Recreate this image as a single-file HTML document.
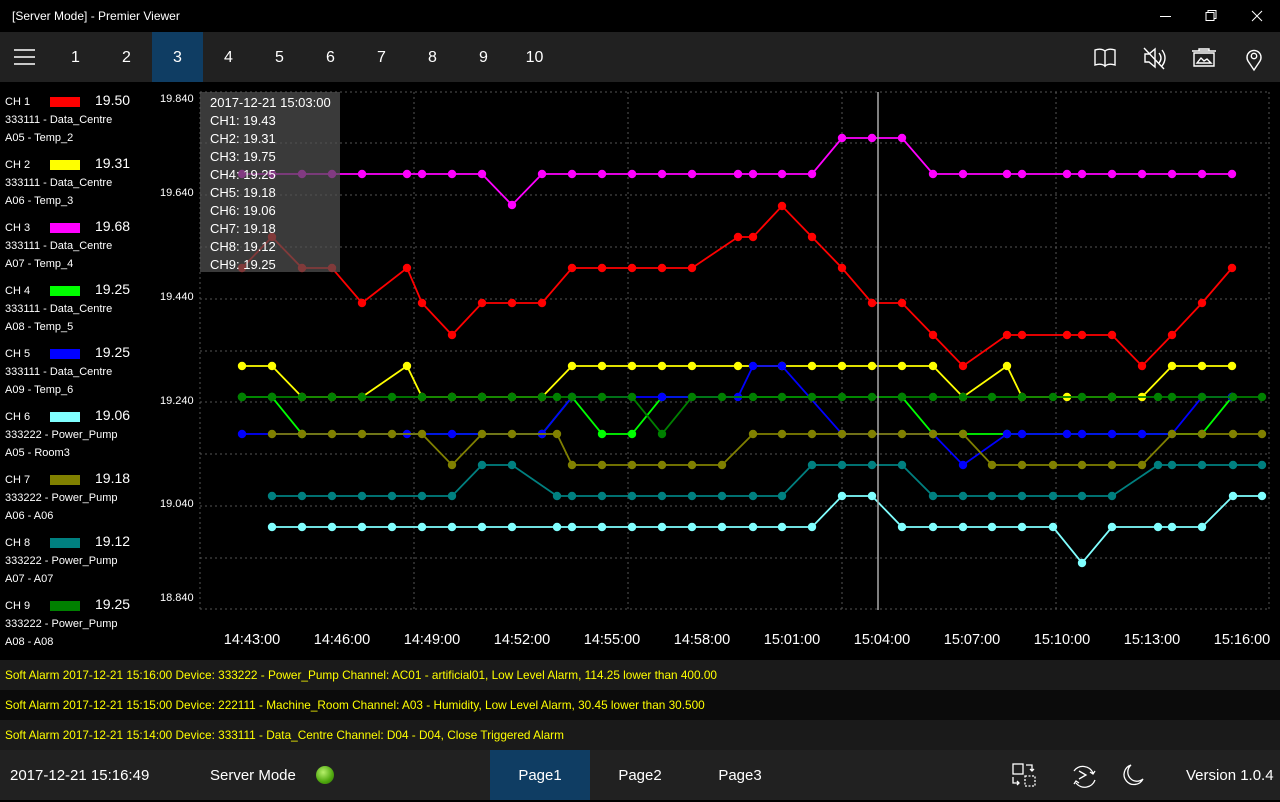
<!DOCTYPE html>
<html><head><meta charset="utf-8">
<style>
*{margin:0;padding:0;box-sizing:border-box}
body{width:1280px;height:800px;background:#000;color:#fff;font-family:"Liberation Sans",sans-serif;position:relative;overflow:hidden}
.abs{position:absolute}
#title{left:0;top:0;width:1280px;height:32px;background:#000;font-size:12px}
#nav{left:0;top:32px;width:1280px;height:50px;background:#212121}
.num{position:absolute;top:1px;width:51px;height:50px;line-height:50px;text-align:center;font-size:16px}
.leg{position:absolute;left:5px;font-size:11px;line-height:18px}
.sw{position:absolute;left:45px;top:4px;width:30px;height:10px}
.val{position:absolute;left:90px;top:-2px;font-size:14px}
.yl{position:absolute;left:160px;font-size:11px}
.xl{position:absolute;top:632px;font-size:14.5px;width:80px;text-align:center}
.al{position:absolute;left:0;width:1280px;height:30px;line-height:31px;padding-left:5px;font-size:11.8px;color:#ffff00}
#bot{left:0;top:750px;width:1280px;height:50px;background:#212121;font-size:15px}
.pg{position:absolute;top:0;width:100px;height:50px;line-height:52px;text-align:center}
</style></head><body>
<div id="title" class="abs"><span class="abs" style="left:12px;top:9px">[Server Mode] - Premier Viewer</span>
<svg class="abs" style="left:1150px;top:0" width="130" height="32" fill="none" stroke="#fff" stroke-width="1"><path d="M10 16.5h11"/><path d="M56 12.5h8v8h-8z M58 12.5v-2h8v8h-2"/><path d="M102 11l10 10M112 11l-10 10"/></svg>
</div>
<div id="nav" class="abs">
<svg class="abs" style="left:13px;top:16px" width="24" height="18" stroke="#fff" stroke-width="1.6"><path d="M1 2h21M1 9h21M1 16h21"/></svg>
<div class="num" style="left:50px">1</div><div class="num" style="left:101px">2</div><div class="num" style="left:152px;top:0;background:#0f3d63;padding-top:1px">3</div><div class="num" style="left:203px">4</div><div class="num" style="left:254px">5</div><div class="num" style="left:305px">6</div><div class="num" style="left:356px">7</div><div class="num" style="left:407px">8</div><div class="num" style="left:458px">9</div><div class="num" style="left:509px">10</div>
<svg class="abs" style="left:1090px;top:12px" width="180" height="28" fill="none" stroke="#fff" stroke-width="1.4">
<path d="M5 6q6-2 10 1v15q-4-3-10-1z M15 7q4-3 10-1v15q-6-2-10 1z"/>
<path d="M55 10h4l6-5v18l-6-5h-4z M69 9q4 5 0 10 M72 6q6 8 0 16 M54 4l20 21"/>
<path d="M102 7h24 M109 7v-2h10v2 M104 9h20v13h-20z M107 19l4-5 3 3 3-2 4 4z"/>
<path d="M164 26l-6-9a7 7 0 1 1 12 0z"/><circle cx="164" cy="12" r="2.7"/>
</svg>
</div>

<div class="leg" style="top:93px">CH 1<div class="sw" style="background:#ff0000"></div><div class="val">19.50</div><br>333111 - Data_Centre<br>A05 - Temp_2</div>
<div class="leg" style="top:156px">CH 2<div class="sw" style="background:#ffff00"></div><div class="val">19.31</div><br>333111 - Data_Centre<br>A06 - Temp_3</div>
<div class="leg" style="top:219px">CH 3<div class="sw" style="background:#ff00ff"></div><div class="val">19.68</div><br>333111 - Data_Centre<br>A07 - Temp_4</div>
<div class="leg" style="top:282px">CH 4<div class="sw" style="background:#00ff00"></div><div class="val">19.25</div><br>333111 - Data_Centre<br>A08 - Temp_5</div>
<div class="leg" style="top:345px">CH 5<div class="sw" style="background:#0000ff"></div><div class="val">19.25</div><br>333111 - Data_Centre<br>A09 - Temp_6</div>
<div class="leg" style="top:408px">CH 6<div class="sw" style="background:#80ffff"></div><div class="val">19.06</div><br>333222 - Power_Pump<br>A05 - Room3</div>
<div class="leg" style="top:471px">CH 7<div class="sw" style="background:#808000"></div><div class="val">19.18</div><br>333222 - Power_Pump<br>A06 - A06</div>
<div class="leg" style="top:534px">CH 8<div class="sw" style="background:#008080"></div><div class="val">19.12</div><br>333222 - Power_Pump<br>A07 - A07</div>
<div class="leg" style="top:597px">CH 9<div class="sw" style="background:#008000"></div><div class="val">19.25</div><br>333222 - Power_Pump<br>A08 - A08</div>

<div class="yl" style="top:93px">19.840</div><div class="yl" style="top:187px">19.640</div><div class="yl" style="top:291px">19.440</div><div class="yl" style="top:395px">19.240</div><div class="yl" style="top:498px">19.040</div><div class="yl" style="top:592px">18.840</div>

<svg class="abs" style="left:0;top:0" width="1280" height="660">
<defs>
<marker id="m1" markerUnits="userSpaceOnUse" markerWidth="10" markerHeight="10" refX="5" refY="5"><circle cx="5" cy="5" r="4.2" fill="#ff0000"/></marker>
<marker id="m2" markerUnits="userSpaceOnUse" markerWidth="10" markerHeight="10" refX="5" refY="5"><circle cx="5" cy="5" r="4.2" fill="#ffff00"/></marker>
<marker id="m3" markerUnits="userSpaceOnUse" markerWidth="10" markerHeight="10" refX="5" refY="5"><circle cx="5" cy="5" r="4.2" fill="#ff00ff"/></marker>
<marker id="m4" markerUnits="userSpaceOnUse" markerWidth="10" markerHeight="10" refX="5" refY="5"><circle cx="5" cy="5" r="4.2" fill="#00ff00"/></marker>
<marker id="m5" markerUnits="userSpaceOnUse" markerWidth="10" markerHeight="10" refX="5" refY="5"><circle cx="5" cy="5" r="4.2" fill="#0000ff"/></marker>
<marker id="m6" markerUnits="userSpaceOnUse" markerWidth="10" markerHeight="10" refX="5" refY="5"><circle cx="5" cy="5" r="4.2" fill="#80ffff"/></marker>
<marker id="m7" markerUnits="userSpaceOnUse" markerWidth="10" markerHeight="10" refX="5" refY="5"><circle cx="5" cy="5" r="4.2" fill="#808000"/></marker>
<marker id="m8" markerUnits="userSpaceOnUse" markerWidth="10" markerHeight="10" refX="5" refY="5"><circle cx="5" cy="5" r="4.2" fill="#008080"/></marker>
<marker id="m9" markerUnits="userSpaceOnUse" markerWidth="10" markerHeight="10" refX="5" refY="5"><circle cx="5" cy="5" r="4.2" fill="#008000"/></marker>
</defs>
<g stroke="#555" stroke-width="1" stroke-dasharray="2,3" fill="none">
<path d="M200 92H1270M200 143H1270M200 195H1270M200 247H1270M200 299H1270M200 351H1270M200 402H1270M200 454H1270M200 506H1270M200 558H1270M200 609H1270"/>
<path d="M200 92V610M414 92V610M628 92V610M842 92V610M1056 92V610M1269 92V610"/>
</g>
<g fill="none" stroke-width="1.8">
<polyline stroke="#ff00ff" marker-start="url(#m3)" marker-mid="url(#m3)" marker-end="url(#m3)" points="242,174 272,174 302,174 332,174 362,174 407,174 422,174 452,174 482,174 512,205 542,174 572,174 602,174 632,174 662,174 692,174 738,174 753,174 782,174 812,174 842,138 872,138 902,138 933,174 963,174 1007,174 1022,174 1067,174 1082,174 1112,174 1142,174 1172,174 1202,174 1232,174"/>
<polyline stroke="#ff0000" marker-start="url(#m1)" marker-mid="url(#m1)" marker-end="url(#m1)" points="242,268 272,237 302,268 332,268 362,303 407,268 422,303 452,335 482,303 512,303 542,303 572,268 602,268 632,268 662,268 692,268 738,237 753,237 782,206 812,237 842,268 872,303 902,303 933,335 963,366 1007,335 1022,335 1067,335 1082,335 1112,335 1142,366 1172,335 1202,303 1232,268"/>
<polyline stroke="#ffff00" marker-start="url(#m2)" marker-mid="url(#m2)" marker-end="url(#m2)" points="242,366 272,366 302,397 332,397 362,397 407,366 422,397 452,397 482,397 512,397 542,397 572,366 602,366 632,366 662,366 692,366 738,366 782,366 812,366 842,366 872,366 902,366 933,366 963,397 1007,366 1022,397 1067,397 1112,397 1142,397 1172,366 1202,366 1232,366"/>
<polyline stroke="#00ff00" marker-start="url(#m4)" marker-mid="url(#m4)" marker-end="url(#m4)" points="242,397 272,397 302,434 542,434 572,397 602,434 632,434 662,397 902,397 933,434 963,434 1007,434 1202,434 1232,397"/>
<polyline stroke="#0000ff" marker-start="url(#m5)" marker-mid="url(#m5)" marker-end="url(#m5)" points="242,434 407,434 452,434 542,434 572,397 662,397 738,397 753,366 782,366 842,434 933,434 963,465 1007,434 1022,434 1067,434 1082,434 1112,434 1142,434 1172,434 1202,397 1232,397"/>
<polyline stroke="#808000" marker-start="url(#m7)" marker-mid="url(#m7)" marker-end="url(#m7)" points="272,434 302,434 332,434 362,434 392,434 422,434 452,465 482,434 512,434 557,434 572,465 602,465 632,465 662,465 692,465 722,465 753,434 782,434 812,434 842,434 872,434 902,434 933,434 963,434 992,465 1022,465 1053,465 1082,465 1112,465 1142,465 1172,434 1202,434 1233,434 1262,434"/>
<polyline stroke="#008080" marker-start="url(#m8)" marker-mid="url(#m8)" marker-end="url(#m8)" points="272,496 302,496 332,496 362,496 392,496 422,496 452,496 482,465 512,465 557,496 572,496 602,496 632,496 662,496 692,496 722,496 753,496 782,496 812,465 842,465 872,465 902,465 933,496 963,496 992,496 1022,496 1053,496 1082,496 1112,496 1158,465 1172,465 1202,465 1233,465 1262,465"/>
<polyline stroke="#80ffff" marker-start="url(#m6)" marker-mid="url(#m6)" marker-end="url(#m6)" points="272,527 302,527 332,527 362,527 392,527 422,527 452,527 482,527 512,527 557,527 572,527 602,527 632,527 662,527 692,527 722,527 753,527 782,527 812,527 842,496 872,496 902,527 933,527 963,527 992,527 1022,527 1053,527 1082,563 1112,527 1158,527 1172,527 1202,527 1233,496 1262,496"/>
<polyline stroke="#008000" marker-start="url(#m9)" marker-mid="url(#m9)" marker-end="url(#m9)" points="242,397 272,397 302,397 332,397 362,397 392,397 422,397 452,397 482,397 512,397 542,397 557,397 572,397 602,397 632,397 662,434 692,397 722,397 753,397 782,397 812,397 842,397 872,397 902,397 933,397 963,397 992,397 1022,397 1053,397 1082,397 1112,397 1158,397 1172,397 1202,397 1233,397 1262,397"/>
</g>
<path d="M878 92V610" stroke="#aaa" stroke-width="1.5"/>
<rect x="200" y="92" width="140" height="180" fill="rgba(80,80,80,0.72)"/>
<g fill="#fff" font-size="13" font-family="Liberation Sans, sans-serif">
<text x="210" y="107">2017-12-21 15:03:00</text><text x="210" y="125">CH1: 19.43</text><text x="210" y="143">CH2: 19.31</text><text x="210" y="161">CH3: 19.75</text><text x="210" y="179">CH4: 19.25</text><text x="210" y="197">CH5: 19.18</text><text x="210" y="215">CH6: 19.06</text><text x="210" y="233">CH7: 19.18</text><text x="210" y="251">CH8: 19.12</text><text x="210" y="269">CH9: 19.25</text>
</g>
</svg>

<div class="xl" style="left:212px">14:43:00</div><div class="xl" style="left:302px">14:46:00</div><div class="xl" style="left:392px">14:49:00</div><div class="xl" style="left:482px">14:52:00</div><div class="xl" style="left:572px">14:55:00</div><div class="xl" style="left:662px">14:58:00</div><div class="xl" style="left:752px">15:01:00</div><div class="xl" style="left:842px">15:04:00</div><div class="xl" style="left:932px">15:07:00</div><div class="xl" style="left:1022px">15:10:00</div><div class="xl" style="left:1112px">15:13:00</div><div class="xl" style="left:1202px">15:16:00</div>

<div class="al" style="top:660px;background:#1a1a1a">Soft Alarm 2017-12-21 15:16:00 Device: 333222 - Power_Pump Channel: AC01 - artificial01, Low Level Alarm, 114.25 lower than 400.00</div>
<div class="al" style="top:690px;background:#0b0b0b">Soft Alarm 2017-12-21 15:15:00 Device: 222111 - Machine_Room Channel: A03 - Humidity, Low Level Alarm, 30.45 lower than 30.500</div>
<div class="al" style="top:720px;background:#1a1a1a">Soft Alarm 2017-12-21 15:14:00 Device: 333111 - Data_Centre Channel: D04 - D04, Close Triggered Alarm</div>

<div id="bot" class="abs">
<span class="abs" style="left:10px;top:17px">2017-12-21 15:16:49</span>
<span class="abs" style="left:210px;top:17px">Server Mode</span>
<div class="abs" style="left:316px;top:16px;width:18px;height:18px;border-radius:50%;background:radial-gradient(circle at 40% 35%,#b6f06a,#4fa80e 60%,#2f6e05)"></div>
<div class="pg" style="left:490px;background:#0f3d63">Page1</div><div class="pg" style="left:590px">Page2</div><div class="pg" style="left:690px">Page3</div>
<svg class="abs" style="left:1010px;top:12px" width="140" height="28" fill="none" stroke="#fff" stroke-width="1.3">
<rect x="3" y="2" width="10" height="10"/><rect x="15" y="14" width="10" height="10" stroke-dasharray="2,1.5"/><path d="M16 3h6v6M20 7l2 2 2-2M3 15v6h6M7 19l2 2-2 2"/>
<path d="M64 9a11 11 0 0 1 19 2M85 18a11 11 0 0 1-19 3M80 10l3 2 2-3M69 21l-3-2-2 3M69 9l7 4-7 4"/>
<path d="M121 3a10 10 0 1 0 12 14a9 9 0 0 1-12-14z"/>
</svg>
<span class="abs" style="left:1186px;top:17px">Version 1.0.4</span>
</div>
</body></html>
